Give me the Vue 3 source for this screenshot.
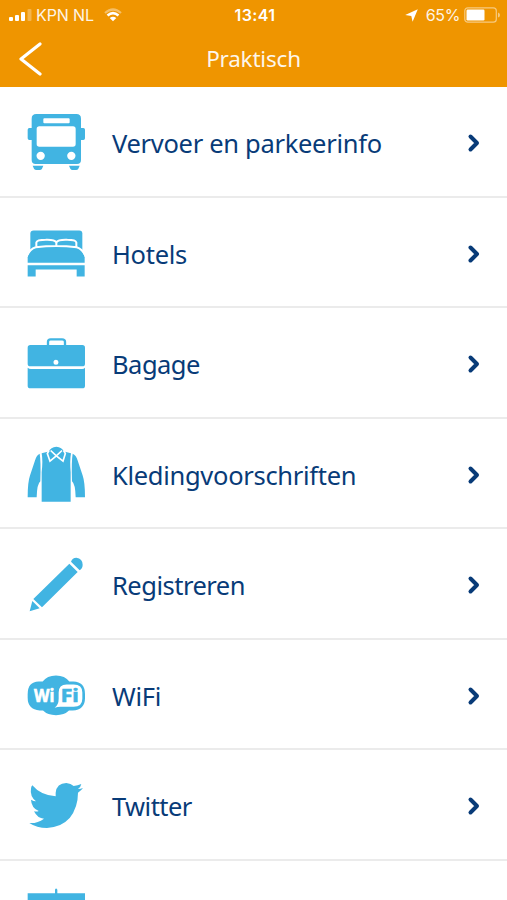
<script setup>
const rows = [
  { id: 'bus', label: 'Vervoer en parkeerinfo', box: '33 36 180 180' },
  { id: 'bed', label: 'Hotels', box: '33 37.5 180 180' },
  { id: 'bag', label: 'Bagage', box: '33 39 180 180' },
  { id: 'shirt', label: 'Kledingvoorschriften', box: '33 40.5 180 180' },
  { id: 'pencil', label: 'Registreren', box: '33 42 180 180' },
  { id: 'wifi', label: 'WiFi', box: '33 43.5 180 180' },
  { id: 'bird', label: 'Twitter', box: '33 45 180 180' },
  { id: 'board', label: '', box: '33 376.5 180 180' }
]
</script>

<template>
  <main class="screen">
    <header class="top">
      <div class="status">
        <div class="side">
          <svg class="signal" viewBox="0 0 23 12">
            <rect x="0" y="8" width="4" height="4" rx="1" /><rect x="6" y="6" width="4" height="6" rx="1" />
            <rect x="12" y="3" width="4" height="9" rx="1" /><rect x="18.5" y="0" width="4" height="12" rx="1" opacity=".3" />
          </svg>
          <span class="carrier">KPN NL</span>
          <svg class="wave" viewBox="0 0 18 14">
            <path d="M1 5Q9-2 17 5" fill="none" stroke="#fff" stroke-width="2.2" opacity=".4" />
            <path d="M3.5 7.4Q9 2.7 14.5 7.4" fill="none" stroke="#fff" stroke-width="2.6" />
            <path d="M5.7 10Q9 7.3 12.3 10L9 13.3Z" />
          </svg>
        </div>
        <span class="clock">13:41</span>
        <div class="side end">
          <svg class="arrow" viewBox="0 0 13 13"><path d="M12.8.2L7.6 12.8 6.3 6.9.2 6Z" /></svg>
          <span class="percent">65%</span>
          <svg class="battery" viewBox="0 0 37 16">
            <rect x=".8" y=".8" width="31.5" height="14.4" rx="3" fill="none" stroke="#fff" stroke-opacity=".5" stroke-width="1.2" />
            <rect x="2.5" y="2.5" width="18" height="11" rx="1.2" /><path d="M34 5.5Q36 6 36 8T34 10.5Z" opacity=".5" />
          </svg>
        </div>
      </div>
      <nav class="nav">
        <svg class="back" viewBox="0 0 24 34"><path d="M21 2L2 17 21 32" /></svg>
        <h1>Praktisch</h1>
      </nav>
    </header>
    <ul class="list">
      <li v-for="r in rows" :key="r.id" class="row">
        <svg class="icon" :viewBox="r.box">
          <template v-if="r.id === 'bus'">
            <path fill-rule="evenodd" d="M64 42H184Q198 42 198 56V84H205Q210 84 210 89V115Q210 120 205 120H198V180Q198 192 186 192H62Q50 192 50 180V120H43Q38 120 38 115V89Q38 84 43 84H50V56Q50 42 64 42ZM88 55Q85 55 85 58V67Q85 70 88 70H161Q164 70 164 67V58Q164 55 161 55ZM73 79Q65 79 65 87V132Q65 140 73 140H174Q182 140 182 132V87Q182 79 174 79ZM77 155A12.5 12.5 0 1 0 77 180A12.5 12.5 0 1 0 77 155ZM169 155A12.5 12.5 0 1 0 169 180A12.5 12.5 0 1 0 169 155Z" />
            <path d="M53 197H85L81 206Q79 210 74 210H65Q59 210 57 206ZM162 197H194L190 206Q188 210 183 210H173Q168 210 166 206Z" />
          </template>
          <template v-else-if="r.id === 'bed'">
            <path d="M56 60H193Q202 60 202 69V125H46V69Q46 60 56 60Z" />
            <path d="M38 157V140Q43 118 62 110Q124 99 185 110Q204 118 209 140V157Z" />
            <path class="gap" d="M35 138Q44 115 62 110Q124 103 185 110Q203 115 212 138M64 109V96Q66 88 92 88Q119 87 124 96Q129 87 157 88Q182 88 184 96V109M124 95V106" />
            <path d="M38 164H209V198H185V177H62V198H38Z" />
          </template>
          <template v-else-if="r.id === 'bag'">
            <path class="line" d="M99 78V65Q99 58 107 58H141Q150 58 150 65V78" />
            <path fill-rule="evenodd" d="M46 75H202Q210 75 210 83V131Q210 139 202 139H46Q38 139 38 131V83Q38 75 46 75ZM123 119A7.5 7.5 0 1 0 123 134A7.5 7.5 0 1 0 123 119Z" />
            <path d="M38 143Q42 147 48 147H201Q207 147 210 143V197Q210 205 202 205H46Q38 205 38 197Z" />
          </template>
          <template v-else-if="r.id === 'shirt'">
            <path d="M74 70Q78 92 76 152Q66 160 65 200H38Q38 155 45 135L60 90Q65 74 74 70ZM173 70Q169 92 171 152Q181 160 182 200H210Q210 155 203 135L188 90Q183 74 173 70Z" />
            <path d="M80 68L101 63Q107 51 124 49Q141 51 147 63L168 68Q164 90 167 125V214H80V125Q84 90 80 68Z" />
            <path class="gap collar" d="M107 60L124 76 141 60M102 60L97 69 105 92 124 76 144 92 151 69 146 60" />
          </template>
          <template v-else-if="r.id === 'pencil'">
            <path d="M163 71L188 96 81 202 55 177ZM168 65Q172 53 184 53Q203 56 203 74Q203 85 194 91ZM52 183L74 205 44 214Z" />
          </template>
          <template v-else-if="r.id === 'wifi'">
            <path d="M71 93H83Q96 75 123 75Q150 75 163 93H175Q210 94 210 131V143Q210 177 173 180H162Q148 194 123 194Q98 194 84 180H74Q38 177 38 142V131Q38 94 71 93Z" />
            <path d="M119 172Q131 163 131 145V126Q131 102 155 102H176Q202 102 202 126V145Q202 169 176 169H137Q128 169 119 172Z" fill="#fff" />
            <text x="57" y="153" textLength="61" lengthAdjust="spacingAndGlyphs" class="wi">Wi</text>
            <text x="137" y="153" textLength="54" lengthAdjust="spacingAndGlyphs" class="fi">Fi</text>
          </template>
          <template v-else-if="r.id === 'bird'">
            <path d="M52 76Q77 106 122 109V98Q125 70 154 69Q168 70 176 78Q188 77 199 72Q197 82 189 87Q197 87 204 84Q198 92 189 98Q189 142 164 174Q139 202 96 204Q65 204 43 189Q66 191 87 176Q68 176 57 154Q66 156 71 153Q49 143 48 119Q56 124 63 124Q44 108 48 86Q48 80 52 76Z" />
          </template>
          <path v-else d="M38 398H120V388Q123 380 127 388V398H210V440H38Z" />
        </svg>
        <span :class="['label', r.id]">{{ r.label }}</span>
        <svg v-if="r.label" class="chevron" viewBox="0 0 14 20"><path d="M3.5 3.5L10 10 3.5 16.5" /></svg>
      </li>
    </ul>
  </main>
</template>

<style>
html, body { margin: 0; height: 900px; overflow: hidden; background: #fff; }
</style>
<style scoped>
.screen { height: 900px; overflow: hidden; background: #fff; font-family: "Noto Sans", "Open Sans", sans-serif; }
.top { height: 87px; background: #ef9500; color: #fff; }
.status { display: grid; grid-template-columns: 1fr 50px 1fr; height: 30px; align-items: center; font: 16px/30px Inter, sans-serif; padding: 0 6px 0 9px; }
.status svg { fill: #fff; flex: none; }
.side { display: flex; align-items: center; }
.end { justify-content: flex-end; }
.signal { width: 23px; height: 12px; margin-right: 4px; }
.carrier { font-size: 16px; letter-spacing: -.1px; opacity: .9; }
.wave { width: 18px; height: 14px; margin-left: 10px; }
.clock { text-align: center; font-weight: 600; letter-spacing: .4px; }
.arrow { width: 13px; height: 13px; margin-right: 8px; }
.percent { font-size: 16px; letter-spacing: -.4px; opacity: .9; margin-right: 4px; }
.battery { width: 37px; height: 16px; }
.nav { display: grid; grid-template-columns: 60px 1fr 60px; align-items: center; height: 57px; }
.back { width: 24px; height: 34px; margin-left: 19px; fill: none; stroke: #fff; stroke-width: 3.2; stroke-linecap: round; stroke-linejoin: round; }
h1 { margin: 0; text-align: center; font-size: 22.5px; font-weight: 400; line-height: 57px; letter-spacing: -.2px; opacity: .92; }
.list { margin: 0; padding: 0; list-style: none; }
.row { box-sizing: border-box; display: flex; height: 110.5px; padding: 0 26px; border-bottom: 2px solid #ebebeb; }
.icon { width: 60px; height: 60px; margin-top: 25px; flex: none; fill: #41b4e2; }
.gap { fill: none; stroke: #fff; stroke-width: 6; }
.collar { stroke-width: 5; }
.line { fill: none; stroke: #41b4e2; stroke-width: 7; }
.wi, .fi { font: 700 52px "Open Sans", sans-serif; stroke-width: 2; }
.wi { fill: #fff; stroke: #fff; }
.fi { stroke: #41b4e2; }
.label { flex: 1; margin-left: 26px; margin-top: 36px; line-height: 40px; font-size: 25.5px; color: #083b78; white-space: nowrap; letter-spacing: -.3px; }
.bag, .pencil { letter-spacing: -.5px; }
.bird { letter-spacing: -.55px; }
.chevron { width: 14px; height: 20px; margin: 46px 0 0; fill: none; stroke: #083b78; stroke-width: 4; stroke-linecap: round; stroke-linejoin: round; }
</style>
